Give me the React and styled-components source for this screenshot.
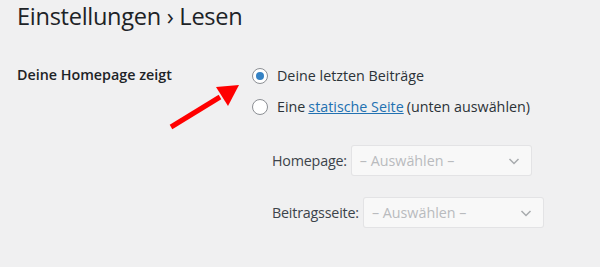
import React from "react";
import styled, { createGlobalStyle } from "styled-components";

const GlobalStyle = createGlobalStyle`
  html, body {
    margin: 0;
    padding: 0;
    background: #f0f0f1;
  }
  body {
    font-family: "Open Sans", "Noto Sans", sans-serif;
    color: #1d2327;
  }
`;

const Page = styled.div`
  position: relative;
  width: 600px;
  height: 267px;
  padding: 0 17px;
  box-sizing: border-box;
  overflow: hidden;
`;

const Title = styled.h1`
  margin: 0;
  padding-top: 1px;
  font-size: 23.6px;
  font-weight: 400;
  line-height: 30px;
  letter-spacing: -0.3px;
`;

const FormRow = styled.div`
  display: grid;
  grid-template-columns: 235px 1fr;
  margin-top: 34px;
`;

const RowLabel = styled.div`
  font-size: 14.3px;
  font-weight: 600;
  line-height: 20px;
`;

const Options = styled.div`
  display: flex;
  flex-direction: column;
`;

const RadioLine = styled.label`
  display: flex;
  align-items: center;
  gap: 9px;
  height: 31px;
  margin-top: ${(p) => (p.first ? "-5px" : "0")};
  font-size: 14.3px;
  color: #2c3338;
`;

const Radio = styled.span`
  width: 16px;
  height: 16px;
  border-radius: 50%;
  border: 1px solid #8c8f94;
  background: #fff;
  box-sizing: border-box;
  display: flex;
  align-items: center;
  justify-content: center;
  flex-shrink: 0;

  &::after {
    content: "";
    display: ${(p) => (p.checked ? "block" : "none")};
    width: 8px;
    height: 8px;
    border-radius: 50%;
    background: #3582c4;
  }
`;

const Link = styled.a`
  color: #2271b1;
  text-decoration: underline;
  margin: 0 3px;
`;

const SubFields = styled.div`
  display: flex;
  flex-direction: column;
  gap: 21px;
  margin-top: 23px;
  padding-left: 20px;
`;

const SubField = styled.div`
  display: flex;
  align-items: center;
  gap: 4px;
  font-size: 14.3px;
  letter-spacing: -0.2px;
  color: #3c434a;
`;

const Select = styled.div`
  width: 181px;
  height: 31px;
  box-sizing: border-box;
  border: 1px solid rgba(220, 220, 222, 0.75);
  border-radius: 3px;
  background: rgba(255, 255, 255, 0.5);
  color: #b9bbbe;
  font-size: 14.3px;
  letter-spacing: 0;
  display: flex;
  align-items: center;
  justify-content: space-between;
  padding: 0 10px 0 8px;
`;

const Chevron = () => (
  <svg width="14" height="14" viewBox="0 0 14 14">
    <path d="M2.5 5 L7 9.5 L11.5 5" fill="none" stroke="#a7aaad" strokeWidth="1.5" />
  </svg>
);

const Arrow = styled.svg`
  position: absolute;
  left: 0;
  top: 0;
  pointer-events: none;
`;

export default function App() {
  return (
    <>
      <GlobalStyle />
      <Page>
        <Title>Einstellungen › Lesen</Title>
        <FormRow>
          <RowLabel>Deine Homepage zeigt</RowLabel>
          <Options>
            <RadioLine first>
              <Radio checked />
              Deine letzten Beiträge
            </RadioLine>
            <RadioLine>
              <Radio />
              <span>
                Eine<Link>statische Seite</Link>(unten auswählen)
              </span>
            </RadioLine>
            <SubFields>
              <SubField>
                Homepage:
                <Select>
                  – Auswählen –
                  <Chevron />
                </Select>
              </SubField>
              <SubField>
                Beitragsseite:
                <Select>
                  – Auswählen –
                  <Chevron />
                </Select>
              </SubField>
            </SubFields>
          </Options>
        </FormRow>
        <Arrow width="600" height="267" viewBox="0 0 600 267">
          <line x1="171" y1="127" x2="220" y2="97" stroke="#ff0000" strokeWidth="5" strokeLinecap="butt" />
          <polygon points="239,85 216,87 228,106" fill="#ff0000" />
        </Arrow>
      </Page>
    </>
  );
}
